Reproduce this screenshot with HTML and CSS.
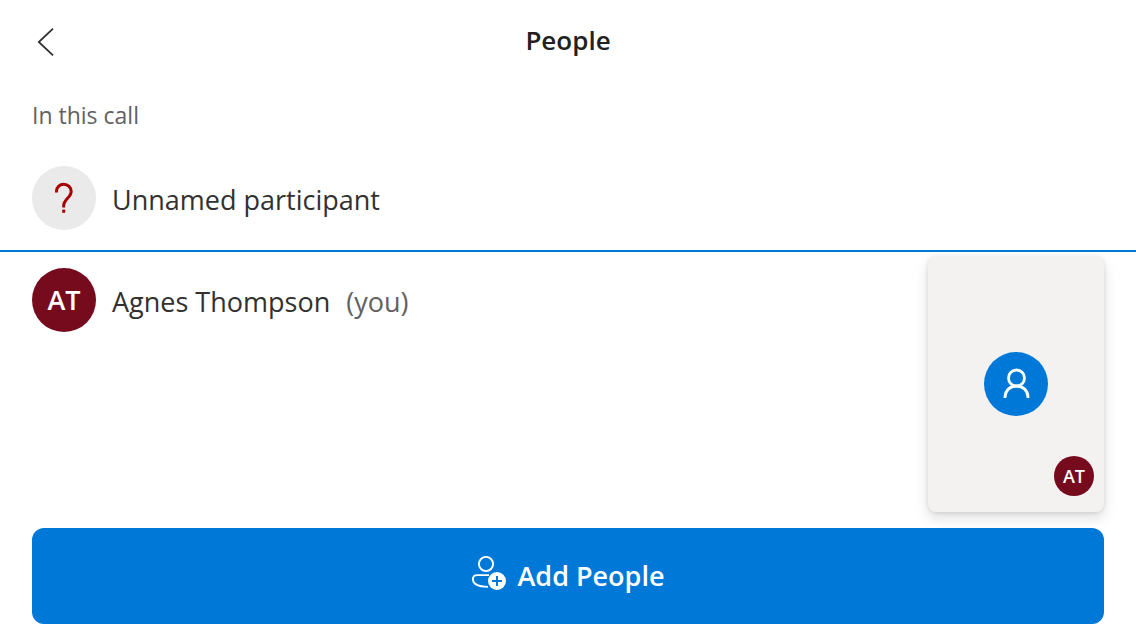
FILE: index.html
```html
<!DOCTYPE html>
<html lang="en">
<head>
<meta charset="utf-8">
<meta name="viewport" content="width=device-width, initial-scale=1">
<title>People</title>
<link rel="stylesheet" href="styles.css">
</head>
<body>
<div class="pane">
  <header class="header">
    <button class="back" type="button" aria-label="Back">
      <svg width="32" height="32" viewBox="0 0 32 32" fill="none" stroke="#323130" stroke-width="1.8"><path d="M23 2.6 8.8 16 23 29.4"/></svg>
    </button>
    <h1 class="title">People</h1>
  </header>
  <main class="content">
    <h2 class="section-label">In this call</h2>
    <ul class="people">
      <li class="person">
        <span class="avatar avatar-unknown">
          <svg width="64" height="64" viewBox="0 0 64 64" fill="none" stroke="#a80000" stroke-width="3"><path d="M24.5 26.6V25C24.5 21.4 27.6 18.3 31.7 18.3 36 18.3 39.2 21.5 39.2 25.5 39.2 31.4 31.7 33.4 31.7 39.7V41.6"/><path d="M31.7 43.6V46.8"/></svg>
        </span>
        <span class="name">Unnamed participant</span>
      </li>
      <li class="person">
        <span class="avatar avatar-initials">AT</span>
        <span class="name">Agnes Thompson</span>
        <span class="you">(you)</span>
      </li>
    </ul>
    <aside class="preview" aria-label="Call preview">
      <span class="avatar avatar-guest">
        <svg width="64" height="64" viewBox="0 0 64 64" fill="none" stroke="#fff" stroke-width="2.8"><circle cx="32.5" cy="26" r="8"/><path d="M21 46V45.2C21 38.6 26 34 32.5 34S44 38.6 44 45.2V46"/></svg>
      </span>
      <span class="badge">AT</span>
    </aside>
  </main>
  <footer class="footer">
    <button class="add" type="button">
      <svg class="add-icon" width="36" height="36" viewBox="0 0 36 36" fill="none" stroke="#fff" stroke-width="1.9"><circle cx="15" cy="8" r="7.1"/><path d="M18 19.1H6.2Q1.9 19.1 1.9 23.1C1.9 28.6 8 30.8 17 30.9"/><circle cx="26" cy="25" r="9" fill="#fff" stroke="none"/><path d="M26 20V30M21 25H31" stroke="#0078d7" stroke-width="2"/></svg>
      <span>Add People</span>
    </button>
  </footer>
</div>
</body>
</html>
```
FILE: styles.css
```css
* { box-sizing: border-box; }

body {
  margin: 0;
  background: #fff;
  color: #323130;
  font-family: "Segoe UI", "Open Sans", "Noto Sans", sans-serif;
  font-size: 27px;
  line-height: 36px;
}

button {
  border: 0;
  padding: 0;
  font: inherit;
  cursor: pointer;
}

svg { display: block; }

.pane {
  display: flex;
  flex-direction: column;
  min-height: 100vh;
}

.header {
  display: grid;
  grid-template-columns: 32px 1fr 32px;
  align-items: end;
  padding: 22px 30px;
}

.back { background: none; }

.title {
  margin: 0;
  color: #212121;
  font-size: 26px;
  font-weight: 600;
  text-align: center;
}

.content {
  position: relative;
  flex: 1;
}

.section-label {
  margin: 0;
  padding: 17px 32px;
  color: #616161;
  font-size: 23px;
  font-weight: 400;
}

.people {
  margin: 0;
  padding: 0;
  list-style: none;
}

.person {
  display: flex;
  align-items: center;
  gap: 16px;
  padding: 16px 32px 20px;
}

.person + .person { border-top: 2px solid #0078d7; }

.name,
.you { padding-top: 4px; }

.you { color: #616161; }

.avatar {
  display: flex;
  flex: none;
  align-items: center;
  justify-content: center;
  width: 64px;
  height: 64px;
  border-radius: 50%;
}

.avatar-unknown { background: #eaeaea; }

.avatar-initials,
.badge {
  background: #750b1c;
  color: #fff;
  font-weight: 600;
}

.avatar-guest { background: #0078d7; }

.preview {
  position: absolute;
  right: 32px;
  bottom: 16px;
  display: flex;
  align-items: center;
  justify-content: center;
  width: 176px;
  height: 256px;
  border-radius: 8px;
  background: #f3f2f1;
  box-shadow: 0 6px 14px rgba(0, 0, 0, 0.13), 0 1px 4px rgba(0, 0, 0, 0.11);
}

.badge {
  position: absolute;
  right: 10px;
  bottom: 16px;
  width: 40px;
  border-radius: 50%;
  font-size: 18px;
  line-height: 40px;
  text-align: center;
}

.footer { padding: 0 32px 16px; }

.add {
  display: flex;
  align-items: center;
  justify-content: center;
  gap: 10px;
  width: 100%;
  padding: 28px 16px;
  border-radius: 12px;
  background: #0078d7;
  color: #fff;
  font-weight: 600;
}

.add-icon { margin-bottom: 4px; }
```
